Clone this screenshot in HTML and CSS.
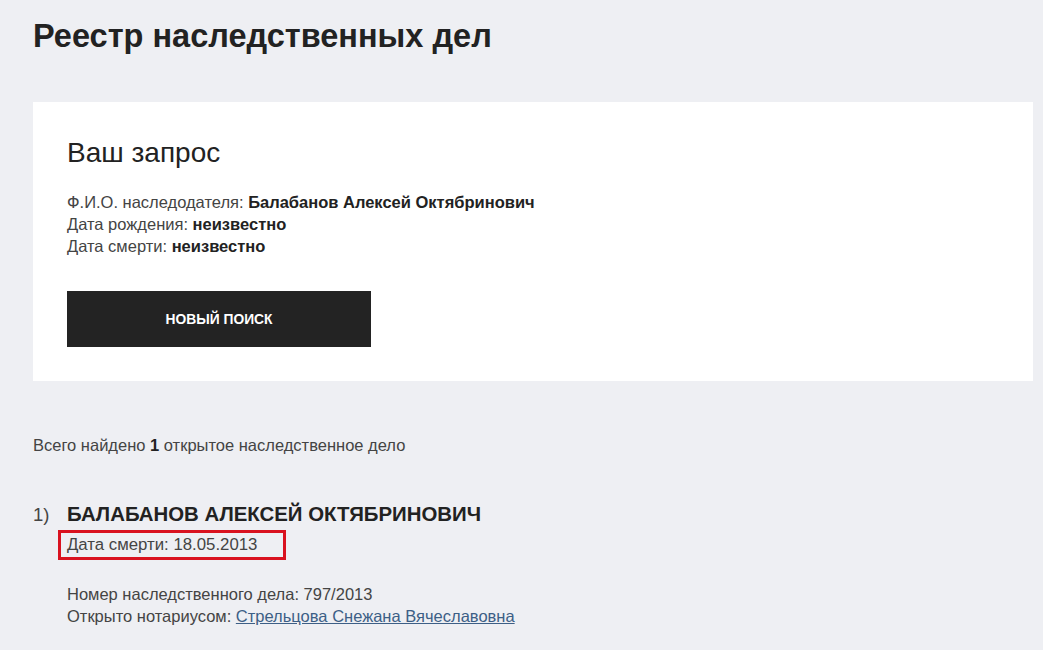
FILE: index.html
```html
<!DOCTYPE html>
<html lang="ru">
<head>
    <meta charset="UTF-8">
    <title>Реестр наследственных дел</title>
    <link rel="stylesheet" href="styles.css">
</head>
<body>
    <div class="page">
        <h1>Реестр наследственных дел</h1>

        <div class="request-card">
            <h2>Ваш запрос</h2>
            <div class="request-info">
                <div>Ф.И.О. наследодателя: <b>Балабанов Алексей Октябринович</b></div>
                <div>Дата рождения: <b>неизвестно</b></div>
                <div>Дата смерти: <b>неизвестно</b></div>
            </div>
            <button class="search-btn">Новый поиск</button>
        </div>

        <div class="found">Всего найдено <b>1</b> открытое наследственное дело</div>

        <div class="case">
            <div class="case-num">1)</div>
            <div class="case-body">
                <div class="case-name">Балабанов Алексей Октябринович</div>
                <div class="case-death"><span class="mark">Дата смерти: 18.05.2013</span></div>
                <div class="case-info">
                    <div>Номер наследственного дела: 797/2013</div>
                    <div>Открыто нотариусом: <a href="#">Стрельцова Снежана Вячеславовна</a></div>
                </div>
            </div>
        </div>
    </div>
</body>
</html>
```

FILE: styles.css
```css
body {
    font-family: "Liberation Sans", Arial, sans-serif;
    background-color: #eeeff3;
    color: #222;
    margin: 0;
    padding: 0;
}

.page {
    padding: 0 10px 0 33px;
}

h1 {
    font-size: 32.5px;
    font-weight: bold;
    margin: 0;
    padding-top: 14px;
    line-height: 44px;
    color: #222;
}

.request-card {
    background-color: white;
    margin-top: 44px;
    padding: 34px;
    height: 211px;
}

h2 {
    font-size: 28px;
    font-weight: normal;
    margin: 0;
    line-height: 34px;
    color: #222;
}

.request-info {
    margin-top: 21px;
    font-size: 16.5px;
    line-height: 22px;
    color: #444;
}

.request-info b {
    color: #222;
}

.search-btn {
    margin-top: 34px;
    width: 304px;
    height: 56px;
    background-color: #232323;
    color: white;
    border: none;
    font-family: "Liberation Sans", Arial, sans-serif;
    font-weight: bold;
    font-size: 13.8px;
    text-transform: uppercase;
}

.found {
    margin-top: 53px;
    font-size: 16.5px;
    line-height: 22px;
    color: #444;
}

.found b {
    color: #222;
}

.case {
    display: flex;
    margin-top: 44px;
}

.case-num {
    width: 34px;
    font-size: 18.5px;
    line-height: 30px;
    color: #444;
}

.case-name {
    font-size: 20.4px;
    font-weight: bold;
    text-transform: uppercase;
    line-height: 28px;
    color: #222;
}

.case-death {
    margin-top: 2px;
}

.mark {
    display: inline-block;
    border: 3px solid #d9121f;
    padding: 1px 26px 1px 6px;
    margin-left: -9px;
    font-size: 16.8px;
    line-height: 22px;
    color: #444;
}

.case-info {
    margin-top: 23px;
    font-size: 16.5px;
    line-height: 22px;
    color: #444;
}

.case-info a {
    color: #3d5f86;
}
```
